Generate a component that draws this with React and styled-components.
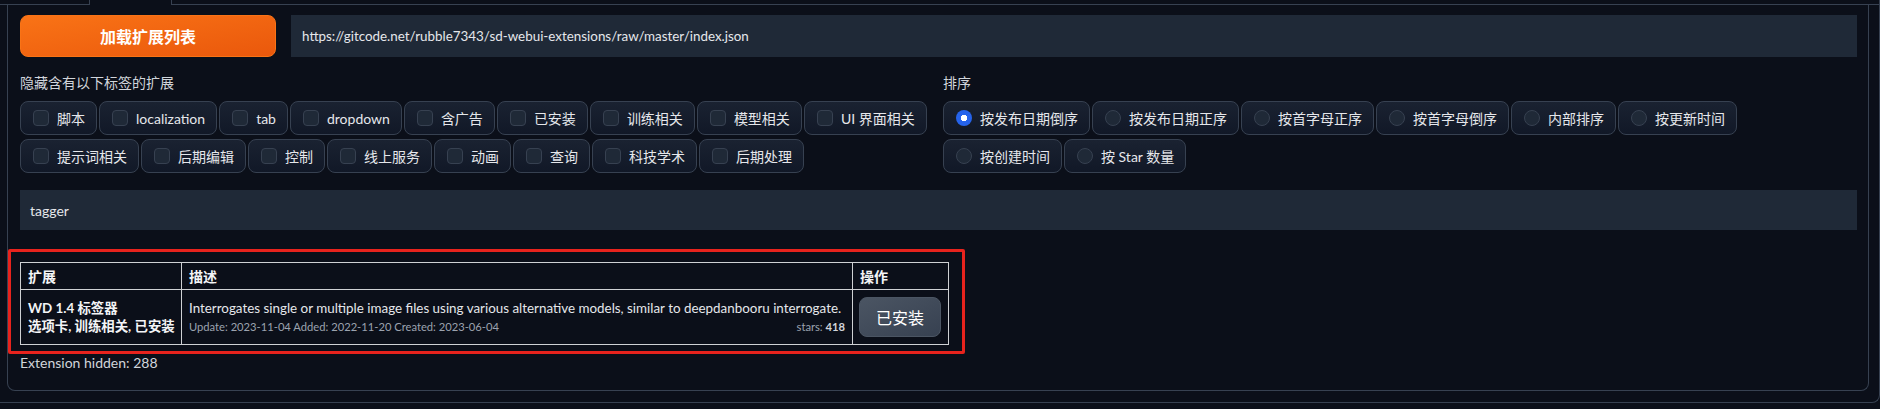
import React from "react";
import styled, { createGlobalStyle } from "styled-components";

const hideTags = [
  ["脚本", "localization", "tab", "dropdown", "含广告", "已安装", "训练相关", "模型相关", "UI 界面相关"],
  ["提示词相关", "后期编辑", "控制", "线上服务", "动画", "查询", "科技学术", "后期处理"],
];

const sortOptions = [
  ["按发布日期倒序", "按发布日期正序", "按首字母正序", "按首字母倒序", "内部排序", "按更新时间"],
  ["按创建时间", "按 Star 数量"],
];

const App = () => (
  <Page>
    <GlobalStyle />
    <TabContent>
      <TabNav>
        <ActiveTab />
      </TabNav>
      <Panel>
        <LoadRow>
          <PrimaryButton>加载扩展列表</PrimaryButton>
          <UrlBox>https://gitcode.net/rubble7343/sd-webui-extensions/raw/master/index.json</UrlBox>
        </LoadRow>

        <Columns>
          <div>
            <GroupLabel>隐藏含有以下标签的扩展</GroupLabel>
            {hideTags.map((row, i) => (
              <ChipRow key={i}>
                {row.map(tag => (
                  <Chip key={tag}>
                    <Box />
                    {tag}
                  </Chip>
                ))}
              </ChipRow>
            ))}
          </div>
          <div>
            <GroupLabel>排序</GroupLabel>
            {sortOptions.map((row, i) => (
              <ChipRow key={i}>
                {row.map((opt, j) => (
                  <Chip key={opt}>
                    <Radio checked={i === 0 && j === 0} />
                    {opt}
                  </Chip>
                ))}
              </ChipRow>
            ))}
          </div>
        </Columns>

        <SearchBox>tagger</SearchBox>

        <Marked>
          <Table>
            <colgroup>
              <col style={{ width: 161 }} />
              <col style={{ width: 671 }} />
              <col style={{ width: 96 }} />
            </colgroup>
            <thead>
              <tr>
                <Th>扩展</Th>
                <Th>描述</Th>
                <Th>操作</Th>
              </tr>
            </thead>
            <tbody>
              <tr>
                <NameCell>
                  WD 1.4 标签器
                  <br />
                  选项卡, 训练相关, 已安装
                </NameCell>
                <DescCell>
                  <Desc>
                    Interrogates single or multiple image files using various alternative models, similar to
                    deepdanbooru interrogate.
                  </Desc>
                  <Meta>
                    <span>Update: 2023-11-04 Added: 2022-11-20 Created: 2023-06-04</span>
                    <span>
                      stars: <b>418</b>
                    </span>
                  </Meta>
                </DescCell>
                <ActionCell>
                  <InstalledButton>已安装</InstalledButton>
                </ActionCell>
              </tr>
            </tbody>
          </Table>
        </Marked>

        <Footnote>Extension hidden: 288</Footnote>
      </Panel>
    </TabContent>
  </Page>
);

const GlobalStyle = createGlobalStyle`
  body {
    margin: 0;
    background: #0b0f19;
    font-family: Lato, "Noto Sans CJK SC", sans-serif;
    color: #e5e7eb;
  }
`;

const Page = styled.div`
  width: 1880px;
  height: 409px;
  overflow: hidden;
  background: #0b0f19;
`;

const TabContent = styled.div`
  border-right: 1px solid #374151;
  border-bottom: 1px solid #374151;
  border-bottom-right-radius: 8px;
  padding: 0 10px 11px 0;
`;

const TabNav = styled.div`
  height: 4px;
  border-bottom: 1px solid #374151;
  margin-right: -10px;
  display: flex;
`;

const ActiveTab = styled.div`
  margin-left: 89px;
  width: 81px;
  height: 5px;
  border-left: 1px solid #374151;
  border-right: 1px solid #374151;
  background: #0b0f19;
`;

const Panel = styled.div`
  margin-left: 7px;
  border: 1px solid #374151;
  border-top: none;
  border-radius: 0 0 8px 8px;
  padding: 10px 11px 17px 12px;
`;

const LoadRow = styled.div`
  display: flex;
  gap: 15px;
  height: 42px;
`;

const PrimaryButton = styled.button`
  flex: 0 0 256px;
  border: 1px solid #f97316;
  border-radius: 8px;
  background: linear-gradient(to bottom right, #f97316, #ea580c);
  color: #fff;
  font-family: Lato, "Noto Sans CJK SC", sans-serif;
  font-size: 16px;
  font-weight: 700;
`;

const UrlBox = styled.div`
  flex: 1;
  display: flex;
  align-items: center;
  padding: 0 11px;
  background: #1f2937;
  font-size: 13.4px;
  color: #e5e7eb;
`;

const Columns = styled.div`
  display: grid;
  grid-template-columns: 1fr 1fr;
  column-gap: 9px;
  margin-top: 16px;
`;

const GroupLabel = styled.div`
  font-size: 14px;
  line-height: 20px;
  color: #d1d5db;
  margin-bottom: 8px;
`;

const ChipRow = styled.div`
  display: flex;
  gap: 2px;
  & + & {
    margin-top: 4px;
  }
`;

const Chip = styled.label`
  display: flex;
  align-items: center;
  gap: 8px;
  height: 34px;
  box-sizing: border-box;
  padding: 0 11px 0 12px;
  border: 1px solid #374151;
  border-radius: 8px;
  background: linear-gradient(to top, #111827, #1a2231);
  font-size: 14px;
  color: #e5e7eb;
  white-space: nowrap;
`;

const Box = styled.span`
  width: 16px;
  height: 16px;
  box-sizing: border-box;
  border: 1px solid #374151;
  border-radius: 4px;
  background: #1f2937;
`;

const Radio = styled.span`
  width: 16px;
  height: 16px;
  box-sizing: border-box;
  border-radius: 50%;
  border: ${props => (props.checked ? "none" : "1px solid #374151")};
  background: ${props =>
    props.checked ? "radial-gradient(circle, #fff 0 3px, #2563eb 3.5px)" : "#1f2937"};
`;

const SearchBox = styled.div`
  margin-top: 17px;
  height: 40px;
  display: flex;
  align-items: center;
  padding: 0 10px;
  background: #1f2937;
  font-size: 14px;
  color: #e5e7eb;
`;

const Marked = styled.div`
  position: relative;
  width: 928px;
  margin-top: 32px;
  &::after {
    content: "";
    position: absolute;
    top: -13px;
    left: -12px;
    right: -17px;
    bottom: -9px;
    border: 3px solid #e8231d;
    border-radius: 2px;
  }
`;

const Table = styled.table`
  width: 928px;
  table-layout: fixed;
  border-collapse: collapse;
  color: #f3f4f6;
  td,
  th {
    border: 1px solid #cfd1d4;
    vertical-align: middle;
  }
`;

const Th = styled.th`
  height: 26px;
  padding: 0 7px;
  text-align: left;
  font-size: 14px;
  font-weight: 700;
`;

const NameCell = styled.td`
  height: 54px;
  padding: 0 6px 0 7px;
  font-size: 13.4px;
  font-weight: 700;
  line-height: 18px;
  white-space: nowrap;
  overflow: hidden;
`;

const DescCell = styled.td`
  padding: 0 7px;
`;

const Desc = styled.div`
  font-size: 13.4px;
  line-height: 18px;
  white-space: nowrap;
  color: #e5e7eb;
`;

const Meta = styled.div`
  display: flex;
  justify-content: space-between;
  margin-top: 2px;
  font-size: 11.2px;
  line-height: 16px;
  color: #9ca3af;
  b {
    color: #d1d5db;
  }
`;

const ActionCell = styled.td`
  padding: 0 6px;
`;

const InstalledButton = styled.button`
  width: 82px;
  height: 40px;
  border: 1px solid #4b5563;
  border-radius: 8px;
  background: linear-gradient(to bottom right, #4b5563, #374151);
  color: #fff;
  font-family: Lato, "Noto Sans CJK SC", sans-serif;
  font-size: 16px;
`;

const Footnote = styled.div`
  margin-top: 8px;
  font-size: 14px;
  line-height: 20px;
  color: #d1d5db;
`;

export default App;
